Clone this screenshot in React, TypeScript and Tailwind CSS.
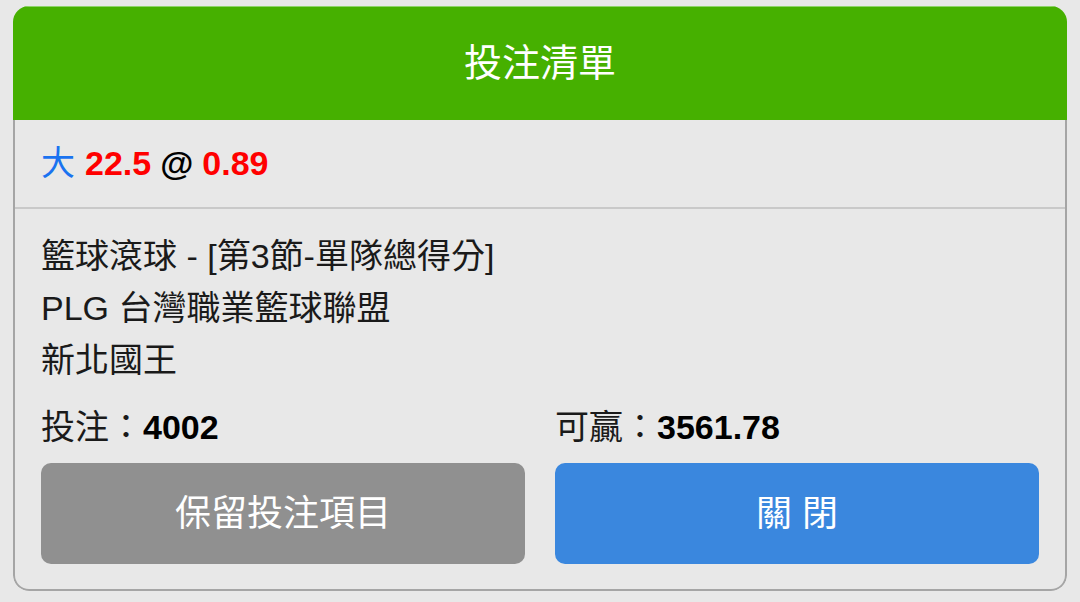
const font = "font-['Liberation_Sans','Noto_Sans_CJK_TC',sans-serif]";

const BetSlip = () => {
  return (
    <div className={`min-h-[602px] w-[1080px] bg-[#e8e8e8] pt-[6px] ${font}`}>
      <div className="mx-[13px] w-[1054px] rounded-[16px] overflow-hidden">
        <div className="flex h-[114px] items-center justify-center bg-[#46b000] border-t border-[#8fd46a]">
          <h1 className="text-[38px] font-normal text-white">投注清單</h1>
        </div>

        <div className="rounded-b-[16px] border-x-2 border-b-2 border-[#a5a5a5] bg-[#e8e8e8]">
          <div className="flex h-[87px] items-center px-[26px] text-[34px] font-bold">
            <span className="font-normal text-[#1a73f0]">大</span>
            <span className="ml-[10px] text-[#ff0000]">22.5</span>
            <span className="ml-[9px] text-black">@</span>
            <span className="ml-[9px] text-[#ff0000]">0.89</span>
          </div>
          <div className="h-[2px] bg-[#c9c9c9]" />

          <div className="px-[26px] pt-[21px] pb-[25px] text-[#1a1a1a]">
            <div className="text-[34px] leading-[52px]">
              <p>籃球滾球 - [第3節-單隊總得分]</p>
              <p>PLG 台灣職業籃球聯盟</p>
              <p>新北國王</p>
            </div>

            <div className="mt-[15px] grid grid-cols-2 gap-x-[30px] text-[34px] leading-[52px]">
              <p>
                投注：<span className="font-bold text-black">4002</span>
              </p>
              <p>
                可贏：<span className="font-bold text-black">3561.78</span>
              </p>
            </div>

            <div className="mt-[10px] grid grid-cols-2 gap-x-[30px]">
              <button className="h-[101px] rounded-[10px] bg-[#909090] text-[36px] text-white">
                保留投注項目
              </button>
              <button className="h-[101px] rounded-[10px] bg-[#3a87de] text-[36px] text-white">
                關 閉
              </button>
            </div>
          </div>
        </div>
      </div>
    </div>
  );
};

export default function App() {
  return <BetSlip />;
}
